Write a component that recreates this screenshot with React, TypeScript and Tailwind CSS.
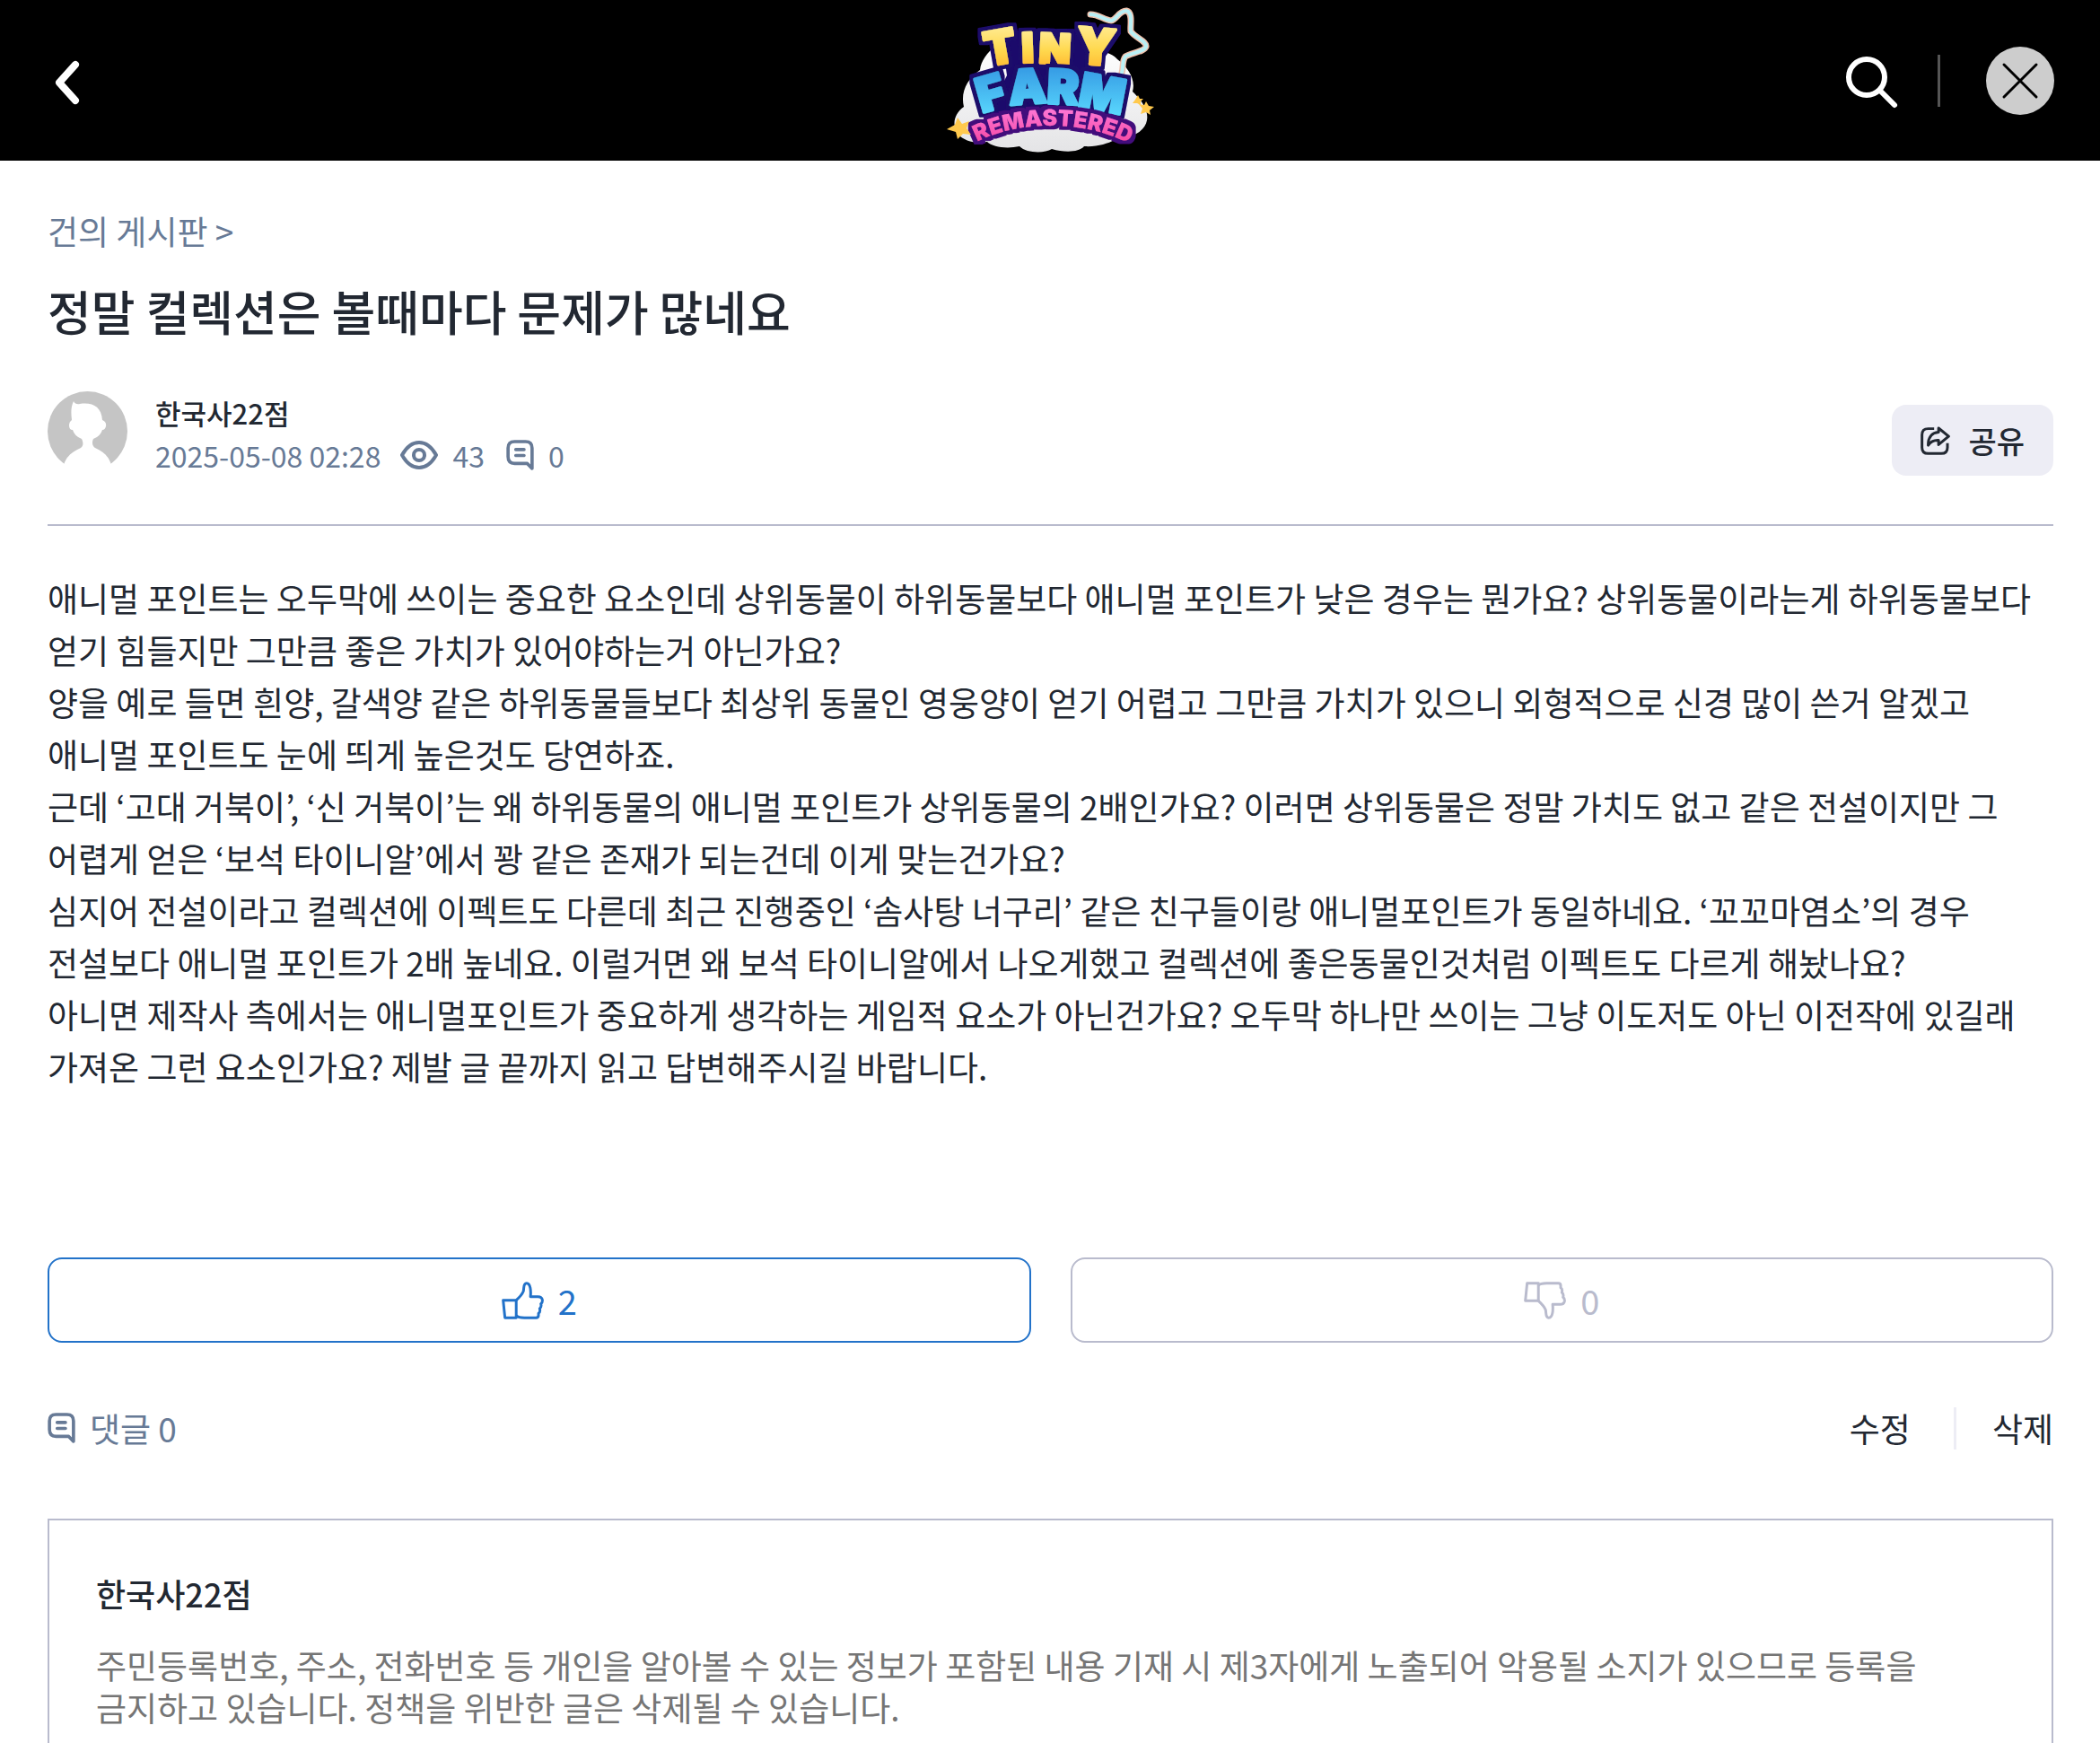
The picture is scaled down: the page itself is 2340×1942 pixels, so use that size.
import React from 'react';

const paragraphs = [
  '애니멀 포인트는 오두막에 쓰이는 중요한 요소인데 상위동물이 하위동물보다 애니멀 포인트가 낮은 경우는 뭔가요? 상위동물이라는게 하위동물보다 얻기 힘들지만 그만큼 좋은 가치가 있어야하는거 아닌가요?',
  '양을 예로 들면 흰양, 갈색양 같은 하위동물들보다 최상위 동물인 영웅양이 얻기 어렵고 그만큼 가치가 있으니 외형적으로 신경 많이 쓴거 알겠고 애니멀 포인트도 눈에 띄게 높은것도 당연하죠.',
  '근데 ‘고대 거북이’, ‘신 거북이’는 왜 하위동물의 애니멀 포인트가 상위동물의 2배인가요? 이러면 상위동물은 정말 가치도 없고 같은 전설이지만 그 어렵게 얻은 ‘보석 타이니알’에서 꽝 같은 존재가 되는건데 이게 맞는건가요?',
  '심지어 전설이라고 컬렉션에 이펙트도 다른데 최근 진행중인 ‘솜사탕 너구리’ 같은 친구들이랑 애니멀포인트가 동일하네요. ‘꼬꼬마염소’의 경우 전설보다 애니멀 포인트가 2배 높네요. 이럴거면 왜 보석 타이니알에서 나오게했고 컬렉션에 좋은동물인것처럼 이펙트도 다르게 해놨나요?',
  '아니면 제작사 측에서는 애니멀포인트가 중요하게 생각하는 게임적 요소가 아닌건가요? 오두막 하나만 쓰이는 그냥 이도저도 아닌 이전작에 있길래 가져온 그런 요소인가요? 제발 글 끝까지 읽고 답변해주시길 바랍니다.',
];

const Logo = () => (
  <svg viewBox="0 0 260 180" className="h-[180px] w-[260px]" role="img" aria-label="Tiny Farm Remastered">
    <defs>
      <linearGradient id="gold" x1="0" y1="0" x2="0" y2="1">
        <stop offset="0.2" stopColor="#ffe98a" />
        <stop offset="0.55" stopColor="#ffd84e" />
        <stop offset="0.9" stopColor="#ffb52c" />
      </linearGradient>
      <linearGradient id="sky" x1="0" y1="0" x2="0" y2="1">
        <stop offset="0.2" stopColor="#389fe6" />
        <stop offset="0.9" stopColor="#5cdcff" />
      </linearGradient>
      <linearGradient id="pink" x1="0" y1="0" x2="0" y2="1">
        <stop offset="0" stopColor="#ff7ddd" />
        <stop offset="1" stopColor="#f5429c" />
      </linearGradient>
      <linearGradient id="cloud" x1="0" y1="0" x2="0" y2="1">
        <stop offset="0" stopColor="#ffffff" />
        <stop offset="1" stopColor="#e4e4e6" />
      </linearGradient>
      <filter id="navyEdge" x="-10%" y="-10%" width="120%" height="120%">
        <feMorphology in="SourceAlpha" operator="dilate" radius="4" result="fat" />
        <feFlood floodColor="#1b0a6b" />
        <feComposite in2="fat" operator="in" result="edge" />
        <feMerge>
          <feMergeNode in="edge" />
          <feMergeNode in="SourceGraphic" />
        </feMerge>
      </filter>
      <filter id="purpleEdge" x="-10%" y="-20%" width="120%" height="140%">
        <feMorphology in="SourceAlpha" operator="dilate" radius="4" result="fat" />
        <feFlood floodColor="#430c7c" />
        <feComposite in2="fat" operator="in" result="edge" />
        <feMerge>
          <feMergeNode in="edge" />
          <feMergeNode in="SourceGraphic" />
        </feMerge>
      </filter>
      <path id="arc" d="M49 158 C95 134 165 134 214 158" />
    </defs>
    <path
      d="M70 51 C60 58 53 68 52 78 C38 88 30 102 34 119 C24 126 20 138 27 149 C35 158 47 160 60 158 C66 164 82 166 96 163 C104 171 124 171 132 166 C146 170 162 170 168 163 C182 164 194 160 202 156 C222 154 236 146 238 134 C240 122 232 112 222 102 C226 88 216 74 205 66 C198 58 186 56 180 62 Z"
      fill="url(#cloud)"
    />
    <path
      d="M175 16 C184 16 190 22 198 23 C204 22 207 12 215 12 C223 14 219 28 220 35 C225 42 238 46 237 52 C235 58 219 59 214 63 C210 68 212 75 210 81"
      fill="none"
      stroke="#f0c2ae"
      strokeWidth="7"
      strokeLinecap="round"
    />
    <path
      d="M175 16 C184 16 190 22 198 23 C204 22 207 12 215 12 C223 14 219 28 220 35 C225 42 238 46 237 52 C235 58 219 59 214 63 C210 68 212 75 210 81"
      fill="none"
      stroke="#b9f0f5"
      strokeWidth="4"
      strokeLinecap="round"
    />
    <path d="M76 40 L100 32 L156 32 L190 44 L182 84 L206 128 L60 128 L82 84 Z" fill="#1b0a6b" />
    <path d="M60 132 C100 114 165 114 206 132 L206 140 C165 126 100 126 60 140 Z" fill="#430c7c" />
    <g fontFamily="Inter, sans-serif" fontWeight="900" strokeLinejoin="round">
      <g filter="url(#navyEdge)" fill="url(#gold)" stroke="url(#gold)" strokeWidth="3">
        <text x="60" y="74" fontSize="52" rotate="-10">T</text>
        <text x="99 117" y="70 70" fontSize="46" rotate="-2 3">IN</text>
        <text x="158" y="70" fontSize="56" rotate="5">Y</text>
      </g>
      <g filter="url(#navyEdge)" fill="url(#sky)" stroke="url(#sky)" strokeWidth="3">
        <text x="54 85 126 160" y="126 117 115 118" fontSize="53" rotate="-16 -4 3 11">FARM</text>
      </g>
      <g filter="url(#purpleEdge)" fill="url(#pink)">
        <text fontSize="25">
          <textPath href="#arc">REMASTERED</textPath>
        </text>
      </g>
    </g>
    <path d="M27 131 L32 138 L40 135 L37 143 L42 150 L33 149 L27 155 L25 147 L15 144 L24 139 Z" fill="#ffc94d" />
    <path d="M237 113 L240 118 L246 119 L241 123 L242 128 L237 125 L231 127 L233 121 L229 116 L235 117 Z" fill="#ffc94d" />
    <path d="M228 106 L230 110 L234 110 L231 113 L231 117 L227 115 L222 115 L225 111 Z" fill="#ffc94d" />
  </svg>
);

const CommentIcon = () => (
  <svg viewBox="0 0 93 103" className="h-[34px] w-[31px]" fill="none" stroke="currentColor" strokeWidth="11" strokeLinejoin="round" strokeLinecap="round">
    <path d="M87 97 L71 80 H28 Q6 80 6 57 V28 Q6 6 28 6 H65 Q87 6 87 28 Z" />
    <path d="M32 33 H60 M32 53 H60" />
  </svg>
);

const EyeIcon = () => (
  <svg viewBox="0 0 42 32" className="h-8 w-[42px]" fill="none" stroke="currentColor" strokeWidth="4">
    <path d="M2 16 C7 7 13 2 21 2 C29 2 35 7 40 16 C35 25 29 30 21 30 C13 30 7 25 2 16 Z" strokeLinejoin="round" />
    <circle cx="21" cy="16" r="6" />
  </svg>
);

const ShareIcon = () => (
  <svg viewBox="0 0 100 97" className="h-8 w-[33px]" fill="none" stroke="currentColor" strokeWidth="9" strokeLinejoin="round">
    <path d="M46 8 H26 Q5 8 5 29 V71 Q5 92 26 92 H70 Q91 92 91 71 V57" />
    <path d="M61 6 L95 34 L61 62 V47 C45 46 34 52 26 64 C25 40 36 22 61 20 Z" />
  </svg>
);

const ThumbIcon = ({ className = '' }) => (
  <svg viewBox="0 0 142 126" className={`h-[42px] w-[47px] ${className}`} fill="none" stroke="currentColor" strokeWidth="9" strokeLinejoin="round">
    <path d="M11 5 H49 V64 H5 Z" />
    <path d="M49 12 C56 5 64 5 76 5 H116 Q124 5 124 13 V20 Q131 24 128 36 Q135 41 132 52 Q138 56 137 65 Q135 76 122 76 H97 C99 96 97 121 84 121 C72 121 76 105 73 94 C69 84 60 74 49 64" />
  </svg>
);

const Avatar = () => (
  <svg viewBox="0 0 89 89" className="h-[89px] w-[89px]">
    <circle cx="44.5" cy="44.5" r="44.5" fill="#c5c5c5" />
    <path
      d="M29 11 Q31 15 36 14 C50 12 60 17 61 32 Q66 34 65 39 Q64 43 61 43 Q59 50 51 53 C49 57 50 61 53 63 C62 67 68 72 71 82 V90 H18 V82 C21 72 28 67 37 63 C40 61 40 57 38 53 Q30 50 28 43 Q24 43 24 38 Q24 34 27 32 C26 24 26 17 29 11 Z"
      fill="#fff"
    />
  </svg>
);

export default function App() {
  return (
    <div className="bg-white font-['Noto_Sans_CJK_KR',sans-serif] text-[#222832]">
      <header className="grid h-[179px] grid-cols-3 items-center overflow-hidden bg-black px-[51px]">
        <button type="button" aria-label="뒤로" className="justify-self-start pl-2 pt-1 text-white">
          <svg viewBox="0 0 32 52" className="h-[52px] w-8" fill="none" stroke="currentColor" strokeWidth="8" strokeLinecap="round" strokeLinejoin="round">
            <path d="M25 6 L7 26 L25 46" />
          </svg>
        </button>
        <a href="#" className="justify-self-center">
          <Logo />
        </a>
        <div className="flex items-center justify-self-end">
          <button type="button" aria-label="검색" className="pt-1 text-white">
            <svg viewBox="0 0 60 60" className="h-[60px] w-[60px]" fill="none" stroke="currentColor" strokeWidth="6" strokeLinecap="round">
              <circle cx="24" cy="24" r="20" />
              <path d="M40 40 L55 55" />
            </svg>
          </button>
          <span className="ml-[43px] h-[58px] w-[3px] bg-[#555]" />
          <button type="button" aria-label="닫기" className="ml-[51px] rounded-full bg-[#cdcdcd] text-black">
            <svg viewBox="0 0 76 76" className="h-[76px] w-[76px]" fill="none" stroke="currentColor" strokeWidth="3" strokeLinecap="round">
              <path d="M20 20 L56 56 M56 20 L20 56" />
            </svg>
          </button>
        </div>
      </header>

      <main className="pl-[53px] pr-[52px] pt-[51px]">
        <a href="#" className="block text-[37px] leading-[54px] text-[#677a96]">
          건의 게시판 &gt;
        </a>
        <h1 className="mt-6 text-[53px] font-medium leading-[76px]">정말 컬렉션은 볼때마다 문제가 많네요</h1>

        <div className="mt-[52px] flex items-end justify-between border-b-2 border-[#b9bbcd] pb-[54px]">
          <div className="flex items-start gap-[31px]">
            <Avatar />
            <div>
              <p className="text-[31px] font-medium leading-[48px]">한국사22점</p>
              <div className="flex items-center text-[32px] leading-[46px] text-[#677a96]">
                <span>2025-05-08 02:28</span>
                <span className="ml-[22px] flex items-center gap-4">
                  <EyeIcon /> 43
                </span>
                <span className="ml-6 flex items-center gap-4">
                  <CommentIcon /> 0
                </span>
              </div>
            </div>
          </div>
          <button type="button" className="flex h-[79px] items-center gap-5 rounded-2xl bg-[#ededf5] px-8 text-[34px] font-medium">
            <ShareIcon /> 공유
          </button>
        </div>

        <article className="mt-[51px] break-keep text-[37px] leading-[58px]">
          {paragraphs.map((text, index) => (
            <p key={index}>{text}</p>
          ))}
        </article>

        <div className="mt-[184px] grid grid-cols-2 gap-11">
          <button type="button" className="flex h-[95px] items-center justify-center gap-4 rounded-2xl border-2 border-[#2272c9] text-[38px] text-[#2272c9]">
            <ThumbIcon className="-scale-y-100" /> 2
          </button>
          <button type="button" className="flex h-[95px] items-center justify-center gap-4 rounded-2xl border-2 border-[#b9bbcd] text-[38px] text-[#b9bbcd]">
            <ThumbIcon /> 0
          </button>
        </div>

        <div className="mt-[68px] flex items-center justify-between text-[37px] leading-[54px]">
          <p className="flex items-center gap-4 text-[#677a96]">
            <CommentIcon /> 댓글 0
          </p>
          <div className="flex items-center">
            <button type="button">수정</button>
            <span className="ml-12 mr-10 h-[47px] w-[3px] bg-[#ededf5]" />
            <button type="button">삭제</button>
          </div>
        </div>

        <form className="mt-[74px] flex h-[250px] flex-col border-2 border-b-0 border-[#b9bbcd] px-[52px] pt-[54px]">
          <label htmlFor="comment" className="text-[36px] font-medium leading-[54px]">
            한국사22점
          </label>
          <textarea
            id="comment"
            placeholder="주민등록번호, 주소, 전화번호 등 개인을 알아볼 수 있는 정보가 포함된 내용 기재 시 제3자에게 노출되어 악용될 소지가 있으므로 등록을 금지하고 있습니다. 정책을 위반한 글은 삭제될 수 있습니다."
            className="mt-[30px] flex-1 resize-none overflow-hidden break-keep text-[37px] leading-[47px] outline-none placeholder:text-[#757575]"
          />
        </form>
      </main>
    </div>
  );
}
